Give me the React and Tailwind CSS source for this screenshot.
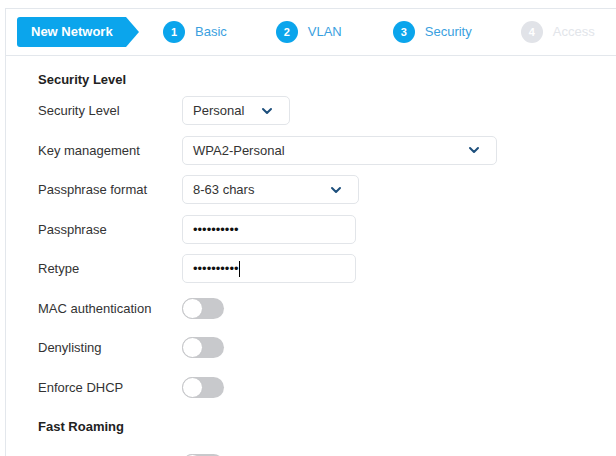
import { ChevronDown } from 'lucide-react';

const steps = [
  { n: 1, label: 'Basic', done: true },
  { n: 2, label: 'VLAN', done: true },
  { n: 3, label: 'Security', done: true },
  { n: 4, label: 'Access', done: false },
];

function Step({ n, label, done }) {
  return (
    <div className="flex items-center gap-[10px]">
      <span
        className={`flex h-[22px] w-[22px] items-center justify-center rounded-full text-[11px] font-bold text-white ${
          done ? 'bg-[#0ba5ec]' : 'bg-[#e1e3e8]'
        }`}
      >
        {n}
      </span>
      <span className={`text-[13px] ${done ? 'text-[#3a9fe0]' : 'text-[#e2e5ea]'}`}>{label}</span>
    </div>
  );
}

function Select({ value, width }) {
  return (
    <div
      className={`flex h-[29px] items-center justify-between rounded-[5px] border border-[#e2e5e9] bg-white pl-[10px] pr-[14px] text-[13px] text-[#333] ${width}`}
    >
      <span>{value}</span>
      <ChevronDown size={16} strokeWidth={3} className="text-[#1d4f7c]" />
    </div>
  );
}

function Password({ caret }) {
  return (
    <div className="flex h-[29px] w-[174px] items-center rounded-[5px] border border-[#e2e5e9] bg-white pl-[10px] text-[13px] text-[#111]">
      <span>••••••••••</span>
      {caret && <span className="h-[16px] w-px bg-black" />}
    </div>
  );
}

function Toggle() {
  return (
    <div className="flex h-[21px] w-[42px] items-center rounded-full bg-[#c8c9cc]">
      <span className="h-[21px] w-[21px] rounded-full border border-[#c4c5c8] bg-white" />
    </div>
  );
}

function Row({ label, children }) {
  return (
    <div className="flex h-[39.5px] items-center">
      <span className="w-[144px] text-[13px] text-[#333]">{label}</span>
      {children}
    </div>
  );
}

export default function App() {
  return (
    <div
      className="h-[456px] overflow-hidden bg-white pt-2 pl-[5px]"
      style={{ fontFamily: '"Liberation Sans", Arial, sans-serif' }}
    >
      <div className="h-full border-l border-t border-[#e3e7ec]">
        {/* wizard header */}
        <div className="flex h-[47px] items-center border-b border-[#e3e7ec] pl-[11px]">
          <div className="flex items-center">
            <div className="flex h-[30px] w-[109px] items-center rounded-l-[3px] bg-[#0ba5ec] pl-[14px] text-[13px] font-bold text-white">
              New Network
            </div>
            <div className="h-0 w-0 border-y-[15px] border-l-[13px] border-y-transparent border-l-[#0ba5ec]" />
          </div>
          <div className="ml-[24px] flex items-center gap-[51px]">
            <Step {...steps[0]} />
            <div className="-ml-[2px]">
              <Step {...steps[1]} />
            </div>
            <Step {...steps[2]} />
            <div className="-ml-[2px]">
              <Step {...steps[3]} />
            </div>
          </div>
        </div>

        {/* security form */}
        <div className="pl-[32px] pt-[16px]">
          <h2 className="mb-[3px] text-[13px] font-bold leading-4 text-[#222]">Security Level</h2>
          <Row label="Security Level">
            <Select value="Personal" width="w-[108px]" />
          </Row>
          <Row label="Key management">
            <Select value="WPA2-Personal" width="w-[315px]" />
          </Row>
          <Row label="Passphrase format">
            <Select value="8-63 chars" width="w-[177px]" />
          </Row>
          <Row label="Passphrase">
            <Password />
          </Row>
          <Row label="Retype">
            <Password caret />
          </Row>
          <Row label="MAC authentication">
            <Toggle />
          </Row>
          <Row label="Denylisting">
            <Toggle />
          </Row>
          <Row label="Enforce DHCP">
            <Toggle />
          </Row>
          <div className="flex h-[39.5px] items-center">
            <h2 className="text-[13px] font-bold text-[#222]">Fast Roaming</h2>
          </div>
          <div className="pl-[144px] pt-[7px]">
            <Toggle />
          </div>
        </div>
      </div>
    </div>
  );
}
